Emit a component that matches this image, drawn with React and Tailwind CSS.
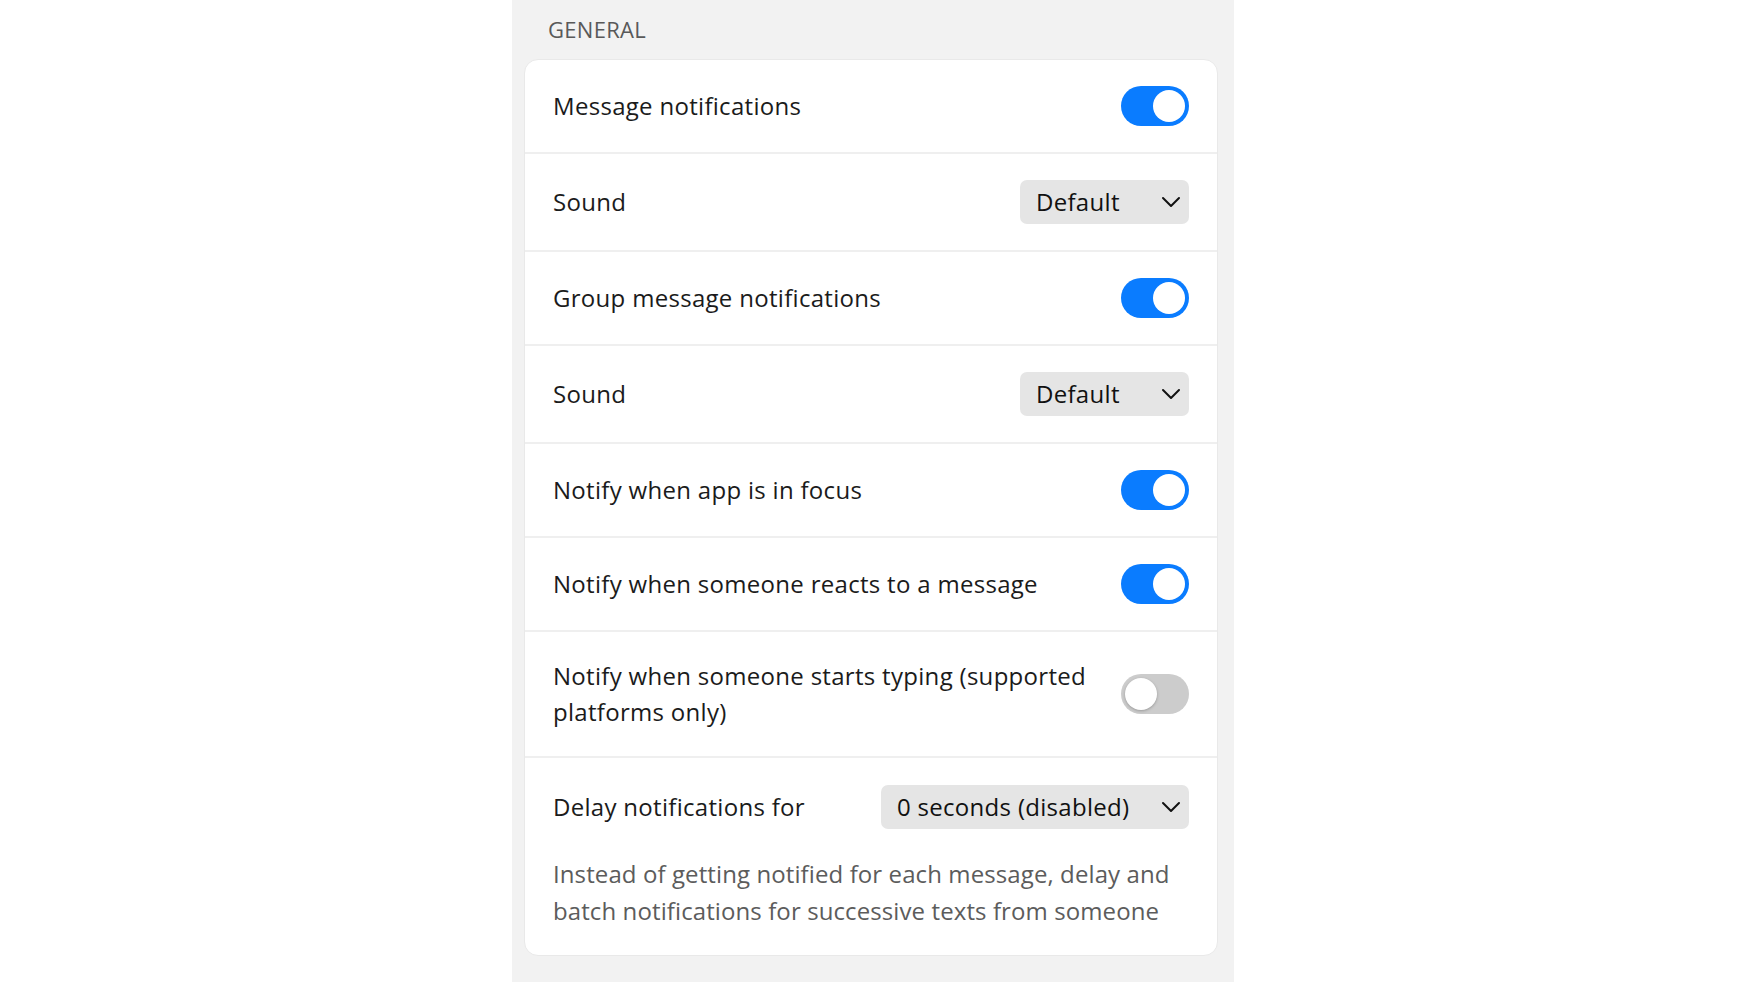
const font = { fontFamily: '"Open Sans", "Noto Sans", sans-serif' };

function Toggle({ on }) {
    return (
        <div
            className={`w-[68px] h-[40px] rounded-full p-[4px] flex shrink-0 ${on ? 'bg-[#0a7cff] justify-end' : 'bg-[#cccccc] justify-start'}`}
        >
            <div className={`w-[32px] h-[32px] rounded-full bg-white ${on ? '' : 'shadow-[0_1px_3px_rgba(0,0,0,0.25)]'}`}></div>
        </div>
    );
}

function Chevron() {
    return (
        <svg width="20" height="12" viewBox="0 0 20 12" fill="none" className="shrink-0">
            <polyline points="2,2 10,10 18,2" stroke="#111" strokeWidth="2" strokeLinecap="round" strokeLinejoin="round" />
        </svg>
    );
}

function Select({ value, width }) {
    return (
        <div className={`${width} h-[44px] rounded-[7px] bg-[#e5e5e5] flex items-center justify-between pl-[16px] pr-[8px] shrink-0`}>
            <span className="text-[#111] text-[24px] tracking-[0.3px]">{value}</span>
            <Chevron />
        </div>
    );
}

function Row({ label, children }) {
    return (
        <div className="flex items-center justify-between gap-6 px-[28px] py-[26px] border-b-2 border-[#efefef]">
            <span className="text-[24px] tracking-[0.3px] leading-[36px] text-[#1b1b1b]">{label}</span>
            {children}
        </div>
    );
}

export default function App() {
    return (
        <div className="w-full min-h-[982px] bg-white" style={font}>
            <div className="w-[722px] min-h-[982px] mx-auto bg-[#f2f2f2] pl-[12px] pr-[16px] pt-[14px]">
                <div className="px-[24px] text-[22px] tracking-[0.3px] leading-[30px] text-[#595959] mb-[15px]">GENERAL</div>
                <div className="bg-white rounded-[14px] border border-[#e9e9e9]">
                    <Row label="Message notifications"><Toggle on /></Row>
                    <Row label="Sound"><Select value="Default" width="w-[169px]" /></Row>
                    <Row label="Group message notifications"><Toggle on /></Row>
                    <Row label="Sound"><Select value="Default" width="w-[169px]" /></Row>
                    <Row label="Notify when app is in focus"><Toggle on /></Row>
                    <Row label="Notify when someone reacts to a message"><Toggle on /></Row>
                    <Row label="Notify when someone starts typing (supported platforms only)"><Toggle /></Row>
                    <div className="px-[28px] pt-[27px] pb-[26px]">
                        <div className="flex items-center justify-between gap-6">
                            <span className="text-[24px] tracking-[0.3px] leading-[36px] text-[#1b1b1b]">Delay notifications for</span>
                            <Select value="0 seconds (disabled)" width="w-[308px]" />
                        </div>
                        <p className="mt-[26px] text-[24px] tracking-[0.1px] leading-[37px] text-[#5c5c5c]">
                            Instead of getting notified for each message, delay and batch notifications for successive texts from someone
                        </p>
                    </div>
                </div>
            </div>
        </div>
    );
}
